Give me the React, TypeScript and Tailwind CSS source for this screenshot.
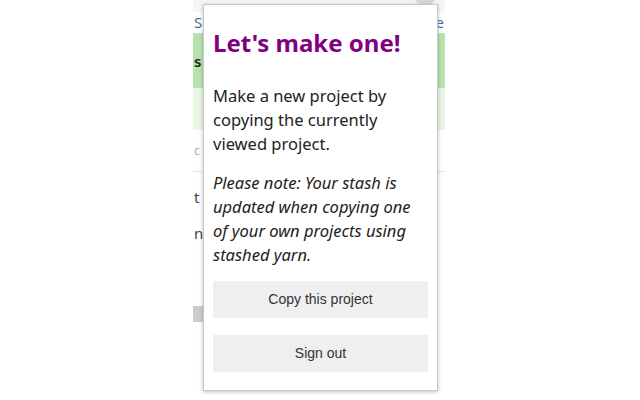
import React from "react";

export default function App() {
  const font = { fontFamily: '"Noto Sans", "Open Sans", sans-serif' };
  return (
    <div className="relative w-[640px] h-[400px] bg-white overflow-hidden">
      {/* page behind the popup */}
      <div className="ml-[193px] w-[252px] flex flex-col" style={font}>
        <div className="h-[12px] bg-[#f4f6fa]" />
        <div className="h-[22px] flex items-center justify-between px-[1px] text-[15px] text-[#4d6d9a] border-b border-[#d6d6d6]">
          <span>S</span>
          <span>e</span>
        </div>
        <div className="h-[54px] bg-[#b9e3ac] flex items-center text-[15px] font-semibold text-[#222] px-[1px]">s</div>
        <div className="h-[42px] bg-[#eaf6e5]" />
        <div className="h-[42px] flex items-center text-[12px] text-[#aaa] border-b border-[#e2e2e2] px-[1px]">c</div>
        <div className="h-[36px] flex items-end text-[15px] text-[#444] px-[1px]">t</div>
        <div className="h-[36px] flex items-end text-[15px] text-[#444] px-[1px]">n</div>
        <div className="h-[62px]" />
        <div className="w-[10px] h-[16px] bg-[#cccccc]" />
      </div>
      {/* circle at top */}
      <div className="absolute left-[412px] top-[-21px] w-[26px] h-[26px] rounded-full bg-[#d8d8d8]" />
      {/* popup */}
      <div
        className="absolute left-[203px] top-[4px] w-[235px] h-[387px] bg-white border border-[#c8c8c8] shadow-[0_1px_4px_rgba(0,0,0,0.25)] px-[9px] flex flex-col"
        style={font}
      >
        <h1 className="mt-[22px] text-[24px] leading-[32px] font-bold text-[#800080]">Let's make one!</h1>
        <p className="mt-[25px] text-[16.5px] leading-[24px] text-[#222]">
          Make a new project by copying the currently viewed project.
        </p>
        <p className="mt-[15px] text-[16.5px] leading-[24px] text-[#222] italic">
          Please note: Your stash is updated when copying one of your own projects using stashed yarn.
        </p>
        <button
          className="mt-[14px] h-[37px] w-full bg-[#efefef] text-[14px] text-[#333]"
          style={{ fontFamily: '"Liberation Sans", Arial, sans-serif' }}
        >
          Copy this project
        </button>
        <button
          className="mt-[17px] h-[37px] w-full bg-[#efefef] text-[14px] text-[#333]"
          style={{ fontFamily: '"Liberation Sans", Arial, sans-serif' }}
        >
          Sign out
        </button>
      </div>
    </div>
  );
}
